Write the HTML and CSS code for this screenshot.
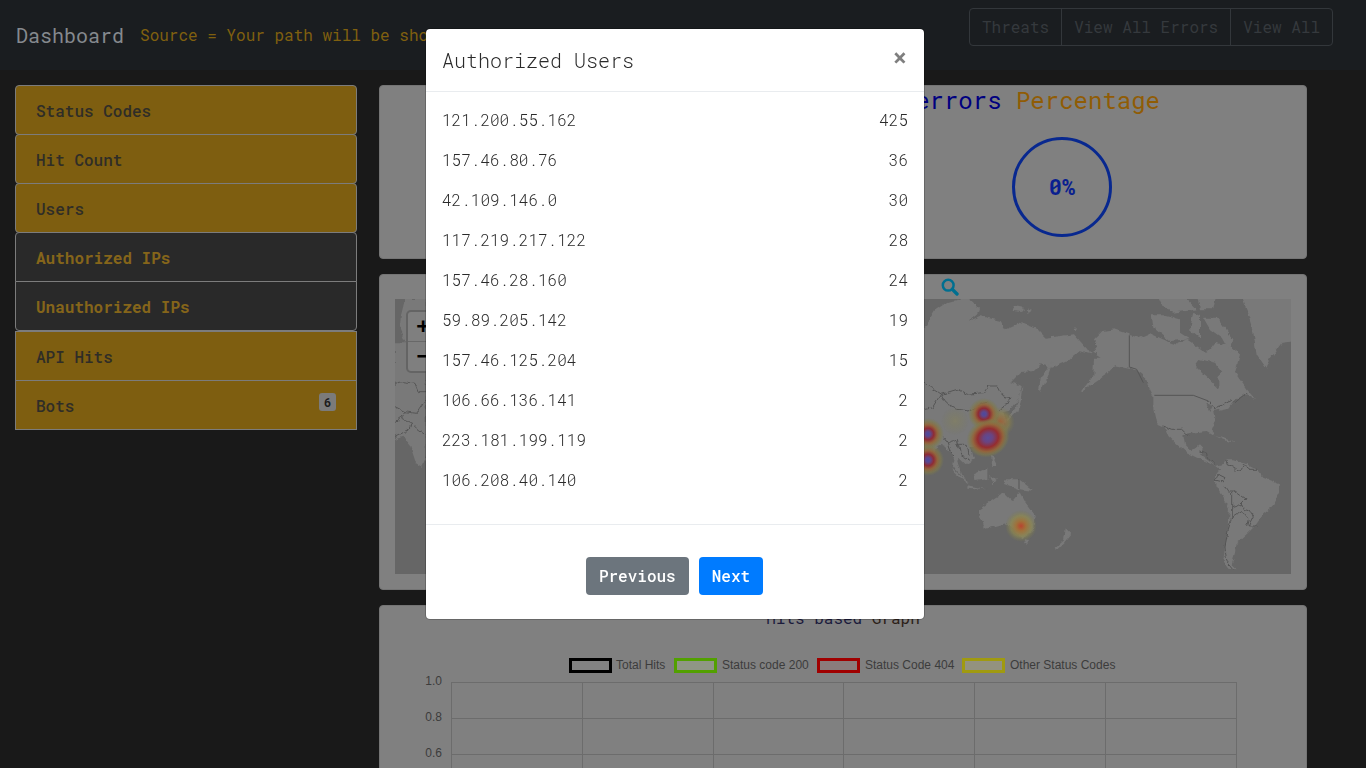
FILE: index.html
```html
<!DOCTYPE html>
<html lang="en">
<head>
<meta charset="utf-8">
<title>Dashboard</title>
<link rel="stylesheet" href="styles.css">
</head>
<body>
<header class="topbar">
  <div class="brand">Dashboard</div>
  <div class="source">Source = Your path will be shown here</div>
  <div class="btn-group">
    <a class="btn-out">Threats</a><a class="btn-out">View All Errors</a><a class="btn-out">View All</a>
  </div>
</header>
<div class="layout">
  <nav class="side">
    <a class="item round">Status Codes</a>
    <a class="item round">Hit Count</a>
    <a class="item round">Users</a>
    <a class="item sub sub-top">Authorized IPs</a>
    <a class="item sub sub-bottom">Unauthorized IPs</a>
    <a class="item plain">API Hits</a>
    <a class="item plain">Bots<span class="badge">6</span></a>
  </nav>
  <main class="content">
    <section class="card card-errors">
      <h2 class="big-title"><span class="blue">errors</span> <span class="orange">Percentage</span></h2>
      <div class="ring">0%</div>
    </section>
    <section class="card card-map">
      <div class="map-head">
        <svg class="search" viewBox="0 0 18 18" width="18" height="18"><circle cx="7.2" cy="7.2" r="5.4"/><line x1="11.4" y1="11.4" x2="16" y2="16"/></svg>
      </div>
      <div class="map">
        <svg class="map-svg" viewBox="0 0 896 275" width="896" height="275">
          <defs>
            <filter id="rough" filterUnits="userSpaceOnUse" x="0" y="0" width="896" height="275">
              <feTurbulence type="fractalNoise" baseFrequency=".14" numOctaves="3" seed="4" result="n"/>
              <feDisplacementMap in="SourceGraphic" in2="n" scale="5" xChannelSelector="R" yChannelSelector="G"/>
              <feGaussianBlur stdDeviation=".35"/>
            </filter>
            <radialGradient id="heat">
              <stop offset="0" stop-color="#4c489f"/>
              <stop offset=".14" stop-color="#5a4890"/>
              <stop offset=".36" stop-color="#8f2b35"/>
              <stop offset=".58" stop-color="#94643a" stop-opacity=".95"/>
              <stop offset=".8" stop-color="#80794a" stop-opacity=".65"/>
              <stop offset="1" stop-color="#7a7a50" stop-opacity="0"/>
            </radialGradient>
            <radialGradient id="heatbig">
              <stop offset="0" stop-color="#5a4c98"/>
              <stop offset=".22" stop-color="#6a4480"/>
              <stop offset=".48" stop-color="#952c30"/>
              <stop offset=".7" stop-color="#94643a" stop-opacity=".95"/>
              <stop offset=".86" stop-color="#80794a" stop-opacity=".6"/>
              <stop offset="1" stop-color="#7a7a50" stop-opacity="0"/>
            </radialGradient>
            <radialGradient id="heat2">
              <stop offset="0" stop-color="#b8442f"/>
              <stop offset=".3" stop-color="#a0703a"/>
              <stop offset=".65" stop-color="#8c8750" stop-opacity=".75"/>
              <stop offset="1" stop-color="#7a7a50" stop-opacity="0"/>
            </radialGradient>
            <radialGradient id="heat3">
              <stop offset="0" stop-color="#a05e36" stop-opacity=".95"/>
              <stop offset=".6" stop-color="#8c8048" stop-opacity=".65"/>
              <stop offset="1" stop-color="#7a7a50" stop-opacity="0"/>
            </radialGradient>
            <radialGradient id="heat4">
              <stop offset="0" stop-color="#86825a" stop-opacity=".55"/>
              <stop offset="1" stop-color="#7a7a50" stop-opacity="0"/>
            </radialGradient>
          </defs>
          <rect class="sea" width="896" height="275"/>
          <g filter="url(#rough)">
          <g transform="translate(-15,-19) scale(.33333)">
            <polygon class="land" points="75,57 137,57 137,530 125,560 108,550 90,495 70,470 45,480 45,190 78,190 60,150 62,110"/>
            <polyline class="bd" points="45,310 70,305 105,310 115,335 137,335"/>
            <polyline class="bd" points="45,380 75,395 65,415 45,430"/>
            <polyline class="bd" points="75,395 110,400 137,360"/>
            <polyline class="bd" points="65,415 95,430 85,450 45,470"/>
            <polyline class="bd" points="95,430 115,450 137,465"/>
          </g>
          <g transform="translate(529,-3) scale(.33333)">
            <polygon class="land" points="-20,95 0,95 30,45 60,25 110,12 110,-9 140,-9 140,12 165,35 160,55 135,75 170,60 230,75 245,100 290,80 340,100 365,125 410,120 450,115 490,160 500,175 465,165 440,185 430,195 385,215 350,205 330,225 290,228 262,258 290,270 285,305 255,345 235,350 240,352 245,375 232,395 222,385 225,365 205,375 235,415 215,440 190,455 150,450 140,450 150,490 125,505 105,485 100,495 110,530 130,560 95,520 85,505 90,480 60,450 45,445 40,455 20,480 0,520 -20,540"/>
            <polygon class="land" points="345,285 350,245 385,197 372,240 350,290"/>
            <polygon class="land" points="295,270 290,315 280,345 250,375 240,390 260,355 275,335 285,300"/>
            <polygon class="land" points="265,28 300,35 295,48 270,45"/>
            <polygon class="land" points="305,38 325,45 310,50"/>
            <polygon class="land" points="445,100 460,97 455,105"/>
            <polygon class="land" points="85,515 135,565 125,560 90,530"/>
            <polygon class="land" points="130,568 190,580 130,575"/>
            <polygon class="land" points="150,535 190,515 190,550 155,555"/>
            <polygon class="land" points="195,540 215,550 205,565"/>
            <polygon class="land" points="200,470 220,510 205,510"/>
            <polygon class="land" points="240,550 285,550 330,585 285,580 245,565"/>
            <polygon class="land" points="165,640 210,610 240,590 265,615 288,588 305,620 335,660 330,700 295,730 270,705 245,682 180,700 165,655"/>
            <polygon class="land" points="300,732 315,735 308,747"/>
            <polygon class="land" points="425,700 440,715 420,740 395,765 392,755 420,730"/>
            <polyline class="bd" points="0,262 20,275 50,295 100,280 130,295 180,290 195,270 220,270 235,300 258,305 245,330 225,345"/>
            <polyline class="bd" points="50,295 65,320 100,340 135,345 190,315"/>
            <polyline class="bd" points="0,340 25,335 50,295"/>
            <polyline class="bd" points="55,420 70,440 100,430 110,475 135,490"/>
            <polyline class="bd" points="100,445 130,445 135,480"/>
            <polyline class="bd" points="70,440 80,470 90,480"/>
          </g>
          <g transform="translate(705,-3) scale(.33333)">
            <polygon class="land" points="42,100 85,115 120,125 150,112 200,135 230,145 260,130 290,150 320,170 345,140 390,150 420,175 405,230 440,280 465,310 440,295 400,315 385,335 340,345 345,380 335,405 345,420 320,405 275,410 250,415 255,445 275,465 300,445 310,455 300,475 320,490 345,510 380,500 360,520 335,505 300,490 260,470 230,445 205,420 195,395 170,385 160,340 160,300 130,240 100,218 45,208 20,235 -60,290 -20,240 -18,185 2,185 -23,170 -8,150 -18,130 7,105"/>
            <polygon class="land" points="155,55 190,55 240,70 240,110 270,130 210,135 160,95"/>
            <polygon class="land" points="170,-9 260,-9 260,10 290,40 220,50 190,35"/>
            <polygon class="land" points="280,50 300,60 300,125 270,100"/>
            <polygon class="land" points="310,65 350,65 400,130 390,170 365,125 330,100"/>
            <polygon class="land" points="290,-9 350,-9 340,40 300,40"/>
            <polygon class="land" points="420,-9 590,-9 590,135 545,140 510,190 500,218 470,175 460,110 440,40"/>
            <polygon class="sea" points="285,210 300,190 345,200 365,225 355,245 355,280 340,260 310,235"/>
            <polygon class="sea" points="318,322 335,330 328,345"/>
            <polygon class="land" points="345,420 375,428 410,440 380,436"/>
            <polygon class="land" points="345,540 360,520 380,490 400,490 440,505 470,520 490,545 540,565 535,590 515,635 490,655 465,690 440,715 410,740 405,770 395,805 410,820 385,815 370,795 375,750 385,700 390,635 350,570"/>
            <polyline class="bd" points="325,315 345,340 395,310 405,320 440,290"/>
            <polyline class="bd" points="190,390 215,400 245,400 265,420"/>
            <polyline class="bd" points="298,465 315,470 320,485 345,505"/>
            <polyline class="bd" points="380,492 385,510 405,515 405,530 425,520 430,505 450,520 470,520"/>
            <polyline class="bd" points="345,555 355,535 375,545 365,560 345,555"/>
            <polyline class="bd" points="375,570 385,585 405,585 395,590 395,635 425,625 440,610 405,585"/>
            <polyline class="bd" points="425,625 430,640 450,645 460,660 445,690 470,690"/>
            <polyline class="bd" points="395,635 395,665 385,700 375,750 380,795 400,820"/>
            <polyline class="bd" points="395,665 425,645 445,670 440,690"/>
          </g>
          </g>
          <g transform="translate(705,-3) scale(.33333)">
            <polyline class="bd" points="88,118 88,213 110,220 130,260"/>
            <polyline class="bd" points="163,298 280,298 325,315"/>
          </g>
          <line class="bd" x1="624" y1="180" x2="624" y2="190"/>
          <circle fill="url(#heat4)" cx="560" cy="122" r="14"/>
          <circle fill="url(#heat3)" cx="605" cy="123" r="15"/>
          <circle fill="url(#heat)" cx="589" cy="115" r="16"/>
          <ellipse fill="url(#heatbig)" cx="593" cy="139" rx="22" ry="19" transform="rotate(-25 593 139)"/>
          <circle fill="url(#heat)" cx="533" cy="135" r="16"/>
          <circle fill="url(#heat)" cx="533" cy="161" r="16"/>
          <circle fill="url(#heat2)" cx="626" cy="227" r="16"/>
        </svg>
        <div class="zoom-ctl">
          <span class="zoom-btn">+</span>
          <span class="zoom-btn">−</span>
        </div>
      </div>
    </section>
    <section class="card card-chart">
      <h3 class="small-title"><span class="hits">Hits based</span> <span class="graph">Graph</span></h3>
      <svg class="chart" viewBox="0 0 896 128" width="896" height="128">
        <rect class="lg" x="175.500" y="19.500" width="40" height="12" fill="#828282" stroke="#000"/>
        <text class="lgt" x="221" y="29">Total Hits</text>
        <rect class="lg" x="280.500" y="19.500" width="40" height="12" fill="#8f9685" stroke="#52a000"/>
        <text class="lgt" x="327" y="29">Status code 200</text>
        <rect class="lg" x="423.500" y="19.500" width="40" height="12" fill="#8a7c7c" stroke="#a00000"/>
        <text class="lgt" x="470" y="29">Status Code 404</text>
        <rect class="lg" x="568.500" y="19.500" width="40" height="12" fill="#93927f" stroke="#a09a10"/>
        <text class="lgt" x="615" y="29">Other Status Codes</text>
        <g class="grid">
          <line x1="56.500" y1="42.500" x2="842" y2="42.500"/>
          <line x1="56.500" y1="78.500" x2="842" y2="78.500"/>
          <line x1="56.500" y1="114.500" x2="842" y2="114.500"/>
          <line x1="56.500" y1="42" x2="56.500" y2="128"/>
          <line x1="187.500" y1="42" x2="187.500" y2="128"/>
          <line x1="318.500" y1="42" x2="318.500" y2="128"/>
          <line x1="448.500" y1="42" x2="448.500" y2="128"/>
          <line x1="579.500" y1="42" x2="579.500" y2="128"/>
          <line x1="710.500" y1="42" x2="710.500" y2="128"/>
          <line x1="841.500" y1="42" x2="841.500" y2="128"/>
        </g>
        <text class="tick" x="47" y="45">1.0</text>
        <text class="tick" x="47" y="81">0.8</text>
        <text class="tick" x="47" y="117">0.6</text>
      </svg>
    </section>
  </main>
</div>
<div class="modal-wrap">
  <div class="modal">
    <div class="modal-head">
      <h4 class="modal-title">Authorized Users</h4>
      <span class="close">×</span>
    </div>
    <div class="modal-body">
      <div class="row"><span>121.200.55.162</span><span>425</span></div>
      <div class="row"><span>157.46.80.76</span><span>36</span></div>
      <div class="row"><span>42.109.146.0</span><span>30</span></div>
      <div class="row"><span>117.219.217.122</span><span>28</span></div>
      <div class="row"><span>157.46.28.160</span><span>24</span></div>
      <div class="row"><span>59.89.205.142</span><span>19</span></div>
      <div class="row"><span>157.46.125.204</span><span>15</span></div>
      <div class="row"><span>106.66.136.141</span><span>2</span></div>
      <div class="row"><span>223.181.199.119</span><span>2</span></div>
      <div class="row"><span>106.208.40.140</span><span>2</span></div>
    </div>
    <div class="modal-foot">
      <button class="btn btn-prev">Previous</button>
      <button class="btn btn-next">Next</button>
    </div>
  </div>
</div>
</body>
</html>
```
FILE: styles.css
```css
* { box-sizing: border-box; }
html, body { margin: 0; height: 100%; }
body {
  background: #191919;
  color: #333;
  font-family: "Roboto Mono", "DejaVu Sans Mono", "Liberation Mono", monospace;
  font-size: 16px;
  line-height: 24px;
  height: 100vh;
  overflow: hidden;
}
.topbar {
  display: flex;
  align-items: flex-start;
  height: 70px;
  padding: 8px 33px 0 16px;
  background: #1a1d20;
}
.brand {
  font-size: 20px;
  line-height: 30px;
  margin-top: 12px;
  color: #85898e;
}
.source {
  margin: 15px 0 0 16px;
  color: #80600f;
}
.btn-group { display: flex; margin-left: auto; }
.btn-out {
  height: 38px;
  padding: 6px 12px;
  margin-left: -1px;
  border: 1px solid #33373b;
  color: #35393d;
}
.btn-out:first-child { border-radius: 4px 0 0 4px; margin-left: 0; }
.btn-out:last-child { border-radius: 0 4px 4px 0; }
.layout {
  display: grid;
  grid-template-columns: 342px 928px;
  column-gap: 22px;
  align-items: start;
  padding: 15px;
}
.side { display: flex; flex-direction: column; }
.item {
  display: flex;
  justify-content: space-between;
  height: 50px;
  padding: 13px 20px 11px;
  margin-bottom: -1px;
  border: 1px solid #7c7c7c;
  background: #7e5e10;
  color: #2f2d27;
  font-weight: 500;
}
.round { border-radius: 4px; }
.sub { background: #292929; color: #85651a; font-weight: 700; }
.sub-top { border-radius: 4px 4px 0 0; }
.sub-bottom { border-radius: 0 0 4px 4px; margin-bottom: 0; }
.badge {
  align-self: flex-start;
  width: 17px;
  height: 18px;
  margin-top: -1px;
  border-radius: 3px;
  background: #7b7b7b;
  color: #1c1c1c;
  font-size: 12px;
  font-weight: 700;
  line-height: 18px;
  text-align: center;
}
.content { display: flex; flex-direction: column; gap: 15px; }
.card {
  background: #808080;
  border: 1px solid #747474;
  border-radius: 4px;
}
.card-errors {
  display: flex;
  flex-direction: column;
  align-items: flex-end;
  height: 174px;
}
.big-title {
  margin: 0 146px 0 0;
  font-size: 24px;
  line-height: 28px;
  font-weight: 400;
}
.blue { color: #00007f; }
.orange { color: #905c05; }
.ring {
  display: flex;
  align-items: center;
  justify-content: center;
  width: 100px;
  height: 100px;
  margin: 23px 194px 0 0;
  border: 3px solid #08288f;
  border-radius: 50%;
  color: #0a1f8f;
  font-size: 22px;
  font-weight: 700;
}
.card-map { padding: 0 15px 15px; height: 316px; }
.map-head {
  display: flex;
  justify-content: flex-end;
  align-items: center;
  height: 24px;
  padding-right: 332px;
}
.search { display: block; }
.search circle { fill: none; stroke: #006f90; stroke-width: 2.5; }
.search line { stroke: #006f90; stroke-width: 3.4; stroke-linecap: round; }
.map { position: relative; width: 896px; height: 275px; overflow: hidden; }
.map-svg { display: block; }
.sea { fill: #666; }
.land { fill: #797979; }
.bd { fill: none; stroke: #565656; stroke-width: 1; vector-effect: non-scaling-stroke; }
.zoom-ctl {
  position: absolute;
  left: 11px;
  top: 11px;
  width: 34px;
  border: 2px solid #646464;
  border-radius: 5px;
  background: #7f7f7f;
}
.zoom-btn {
  display: block;
  width: 30px;
  height: 29px;
  color: #000;
  font: 700 22px/28px "DejaVu Sans Mono", monospace;
  text-align: center;
}
.zoom-btn + .zoom-btn { border-top: 1px solid #686868; height: 30px; }
.card-chart { padding: 0 15px; height: 300px; }
.small-title {
  margin: 0;
  height: 34px;
  font-size: 16px;
  font-weight: 400;
  line-height: 24px;
  text-align: center;
}
.hits { color: #1b1b3c; }
.graph { color: #2c2018; }
.chart { display: block; }
.lg { stroke-width: 3; }
.lgt, .tick {
  font-family: "Liberation Sans", Arial, sans-serif;
  font-size: 12px;
  fill: #3c3c3c;
}
.tick { text-anchor: end; }
.grid line { stroke: #6c6c6c; stroke-width: 1; }
.modal-wrap {
  position: fixed;
  inset: 0;
  display: flex;
  justify-content: center;
  align-items: flex-start;
  padding: 28px 16px 0 0;
}
.modal {
  width: 500px;
  background: #fff;
  background-clip: padding-box;
  border: 1px solid rgba(0,0,0,.2);
  border-radius: 5px;
}
.modal-head {
  display: flex;
  justify-content: space-between;
  height: 63px;
  padding: 16px;
  border-bottom: 1px solid #e9ecef;
}
.modal-title {
  margin: 0;
  font-size: 20px;
  font-weight: 350;
  line-height: 30px;
  color: #2a2a2a;
}
.close {
  font-size: 24px;
  font-weight: 700;
  line-height: 24px;
  margin-right: 1px;
  color: #7f7f7f;
}
.modal-body { padding: 8px 16px 24px; color: #2a2a2a; font-weight: 350; }
.row { display: flex; justify-content: space-between; height: 40px; line-height: 40px; }
.modal-foot {
  display: flex;
  justify-content: center;
  gap: 10px;
  padding: 32px 1px 24px 0;
  border-top: 1px solid #e9ecef;
}
.btn {
  height: 38px;
  padding: 0 12px;
  border: 1px solid transparent;
  border-radius: 4px;
  color: #fff;
  font: 500 16px/36px "Roboto Mono", "DejaVu Sans Mono", monospace;
}
.btn-prev { background: #6c757d; }
.btn-next { background: #007bff; }
```
